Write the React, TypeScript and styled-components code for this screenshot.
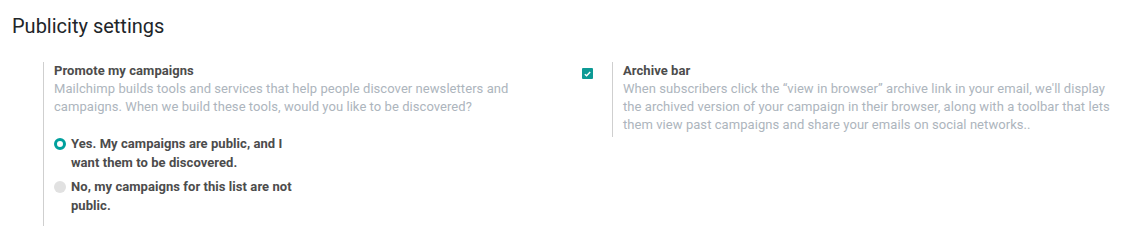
import React, { useState } from "react";
import styled, { createGlobalStyle } from "styled-components";

const GlobalStyle = createGlobalStyle`
  body {
    margin: 0;
    background: #ffffff;
    font-family: Roboto, "Noto Sans", Arial, sans-serif;
  }
`;

const Page = styled.div`
  width: 1130px;
  height: 240px;
  padding-top: 12px;
  box-sizing: border-box;
  overflow: hidden;
`;

const Title = styled.h2`
  margin: 0 0 0 12px;
  font-size: 20px;
  font-weight: 400;
  line-height: 28px;
  color: #212529;
`;

const SettingsRow = styled.div`
  display: flex;
  align-items: flex-start;
  padding: 22px 0 0 13px;
`;

const SettingBox = styled.div<{ $width: number }>`
  display: flex;
  flex: none;
  width: ${(p) => p.$width}px;
`;

const LeftPane = styled.div`
  width: 30px;
  flex: none;
  padding-top: 5px;
`;

const RightPane = styled.div<{ $padBottom?: number; $width: number }>`
  border-left: 1px solid #cfcfcf;
  padding: 0 0 ${(p) => p.$padBottom ?? 0}px 10px;
  font-size: 13px;
  line-height: 18px;
  letter-spacing: 0.06px;
  width: ${(p) => p.$width}px;
`;

const Label = styled.div`
  font-weight: 700;
  color: #4c4c4c;
`;

const Description = styled.div`
  color: #adb5bd;
`;

const RadioList = styled.div`
  display: flex;
  flex-direction: column;
  gap: 6px;
  margin-top: 19px;
  width: 245px;
`;

const RadioItem = styled.label`
  display: flex;
  align-items: flex-start;
  gap: 5px;
  font-weight: 700;
  color: #4c4c4c;
  cursor: pointer;
  line-height: 18.5px;
`;

const RadioDot = styled.span<{ $checked: boolean }>`
  flex: none;
  width: 12px;
  height: 12px;
  margin-top: 3px;
  border-radius: 50%;
  box-sizing: border-box;
  background: ${(p) => (p.$checked ? "#ffffff" : "#e1e1e1")};
  border: ${(p) => (p.$checked ? "3.5px solid #00a09d" : "none")};
`;

const CheckBox = styled.span<{ $checked: boolean }>`
  display: flex;
  align-items: center;
  justify-content: center;
  width: 11px;
  height: 11px;
  margin-top: 1px;
  border-radius: 1px;
  background: ${(p) => (p.$checked ? "#0d9a95" : "#e1e1e1")};
  cursor: pointer;
`;

const options = [
  { id: "public", text: "Yes. My campaigns are public, and I want them to be discovered." },
  { id: "private", text: "No, my campaigns for this list are not public." },
];

export default function App() {
  const [choice, setChoice] = useState("public");
  const [archive, setArchive] = useState(true);

  return (
    <Page>
      <GlobalStyle />
      <Title>Publicity settings</Title>
      <SettingsRow>
        <SettingBox $width={569}>
          <LeftPane />
          <RightPane $padBottom={11} $width={480}>
            <Label>Promote my campaigns</Label>
            <Description>
              Mailchimp builds tools and services that help people discover newsletters and
              campaigns. When we build these tools, would you like to be discovered?
            </Description>
            <RadioList>
              {options.map((o) => (
                <RadioItem key={o.id} onClick={() => setChoice(o.id)}>
                  <RadioDot $checked={choice === o.id} />
                  <span>{o.text}</span>
                </RadioItem>
              ))}
            </RadioList>
          </RightPane>
        </SettingBox>
        <SettingBox $width={540}>
          <LeftPane>
            <CheckBox $checked={archive} onClick={() => setArchive(!archive)}>
              {archive && (
                <svg width="7" height="6" viewBox="0 0 7 6">
                  <path d="M0.8 3.2 L2.6 4.8 L6.2 1" fill="none" stroke="#fff" strokeWidth="1.4" />
                </svg>
              )}
            </CheckBox>
          </LeftPane>
          <RightPane $padBottom={3} $width={496}>
            <Label>Archive bar</Label>
            <Description>
              When subscribers click the “view in browser” archive link in your email, we'll display
              the archived version of your campaign in their browser, along with a toolbar that lets
              them view past campaigns and share your emails on social networks..
            </Description>
          </RightPane>
        </SettingBox>
      </SettingsRow>
    </Page>
  );
}
